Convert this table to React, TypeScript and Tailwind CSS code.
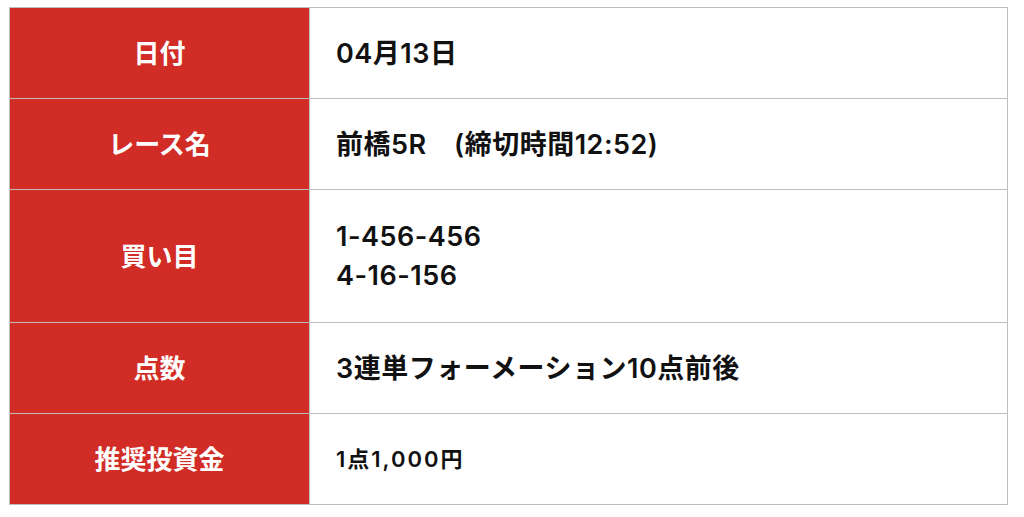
import React from "react"

const rows: { label: string; value: React.ReactNode; small?: boolean; tall?: boolean }[] = [
  { label: "日付", value: "04月13日" },
  { label: "レース名", value: "前橋5R\u3000(締切時間12:52)" },
  { label: "買い目", value: (<><div>1-456-456</div><div>4-16-156</div></>), tall: true },
  { label: "点数", value: "3連単フォーメーション10点前後" },
  { label: "推奨投資金", value: "1点1,000円", small: true },
]

export default function App() {
  return (
    <div className="w-[1024px] h-[517px] bg-white pt-[7px] pl-[9px]" style={{ fontFamily: 'Inter, "Noto Sans CJK JP", sans-serif' }}>
      <div className="w-[999px] border border-[#bdbdbd]">
        {rows.map((r, i) => (
          <div key={i} className={`grid grid-cols-[300px_1fr] ${i < rows.length - 1 ? "border-b border-[#bdbdbd]" : ""}`}>
            <div className={`bg-[#d12c26] border-r border-[#bdbdbd] flex items-center justify-center text-white font-bold text-[26px] ${r.tall ? "h-[132px]" : "h-[90px]"}`}>
              {r.label}
            </div>
            <div className={`flex flex-col justify-center pl-[26px] text-[#111] font-semibold ${r.small ? "text-[22px] tracking-[2px]" : "text-[27px] leading-[39px] tracking-[0.5px]"}`}>
              {r.value}
            </div>
          </div>
        ))}
      </div>
    </div>
  )
}
